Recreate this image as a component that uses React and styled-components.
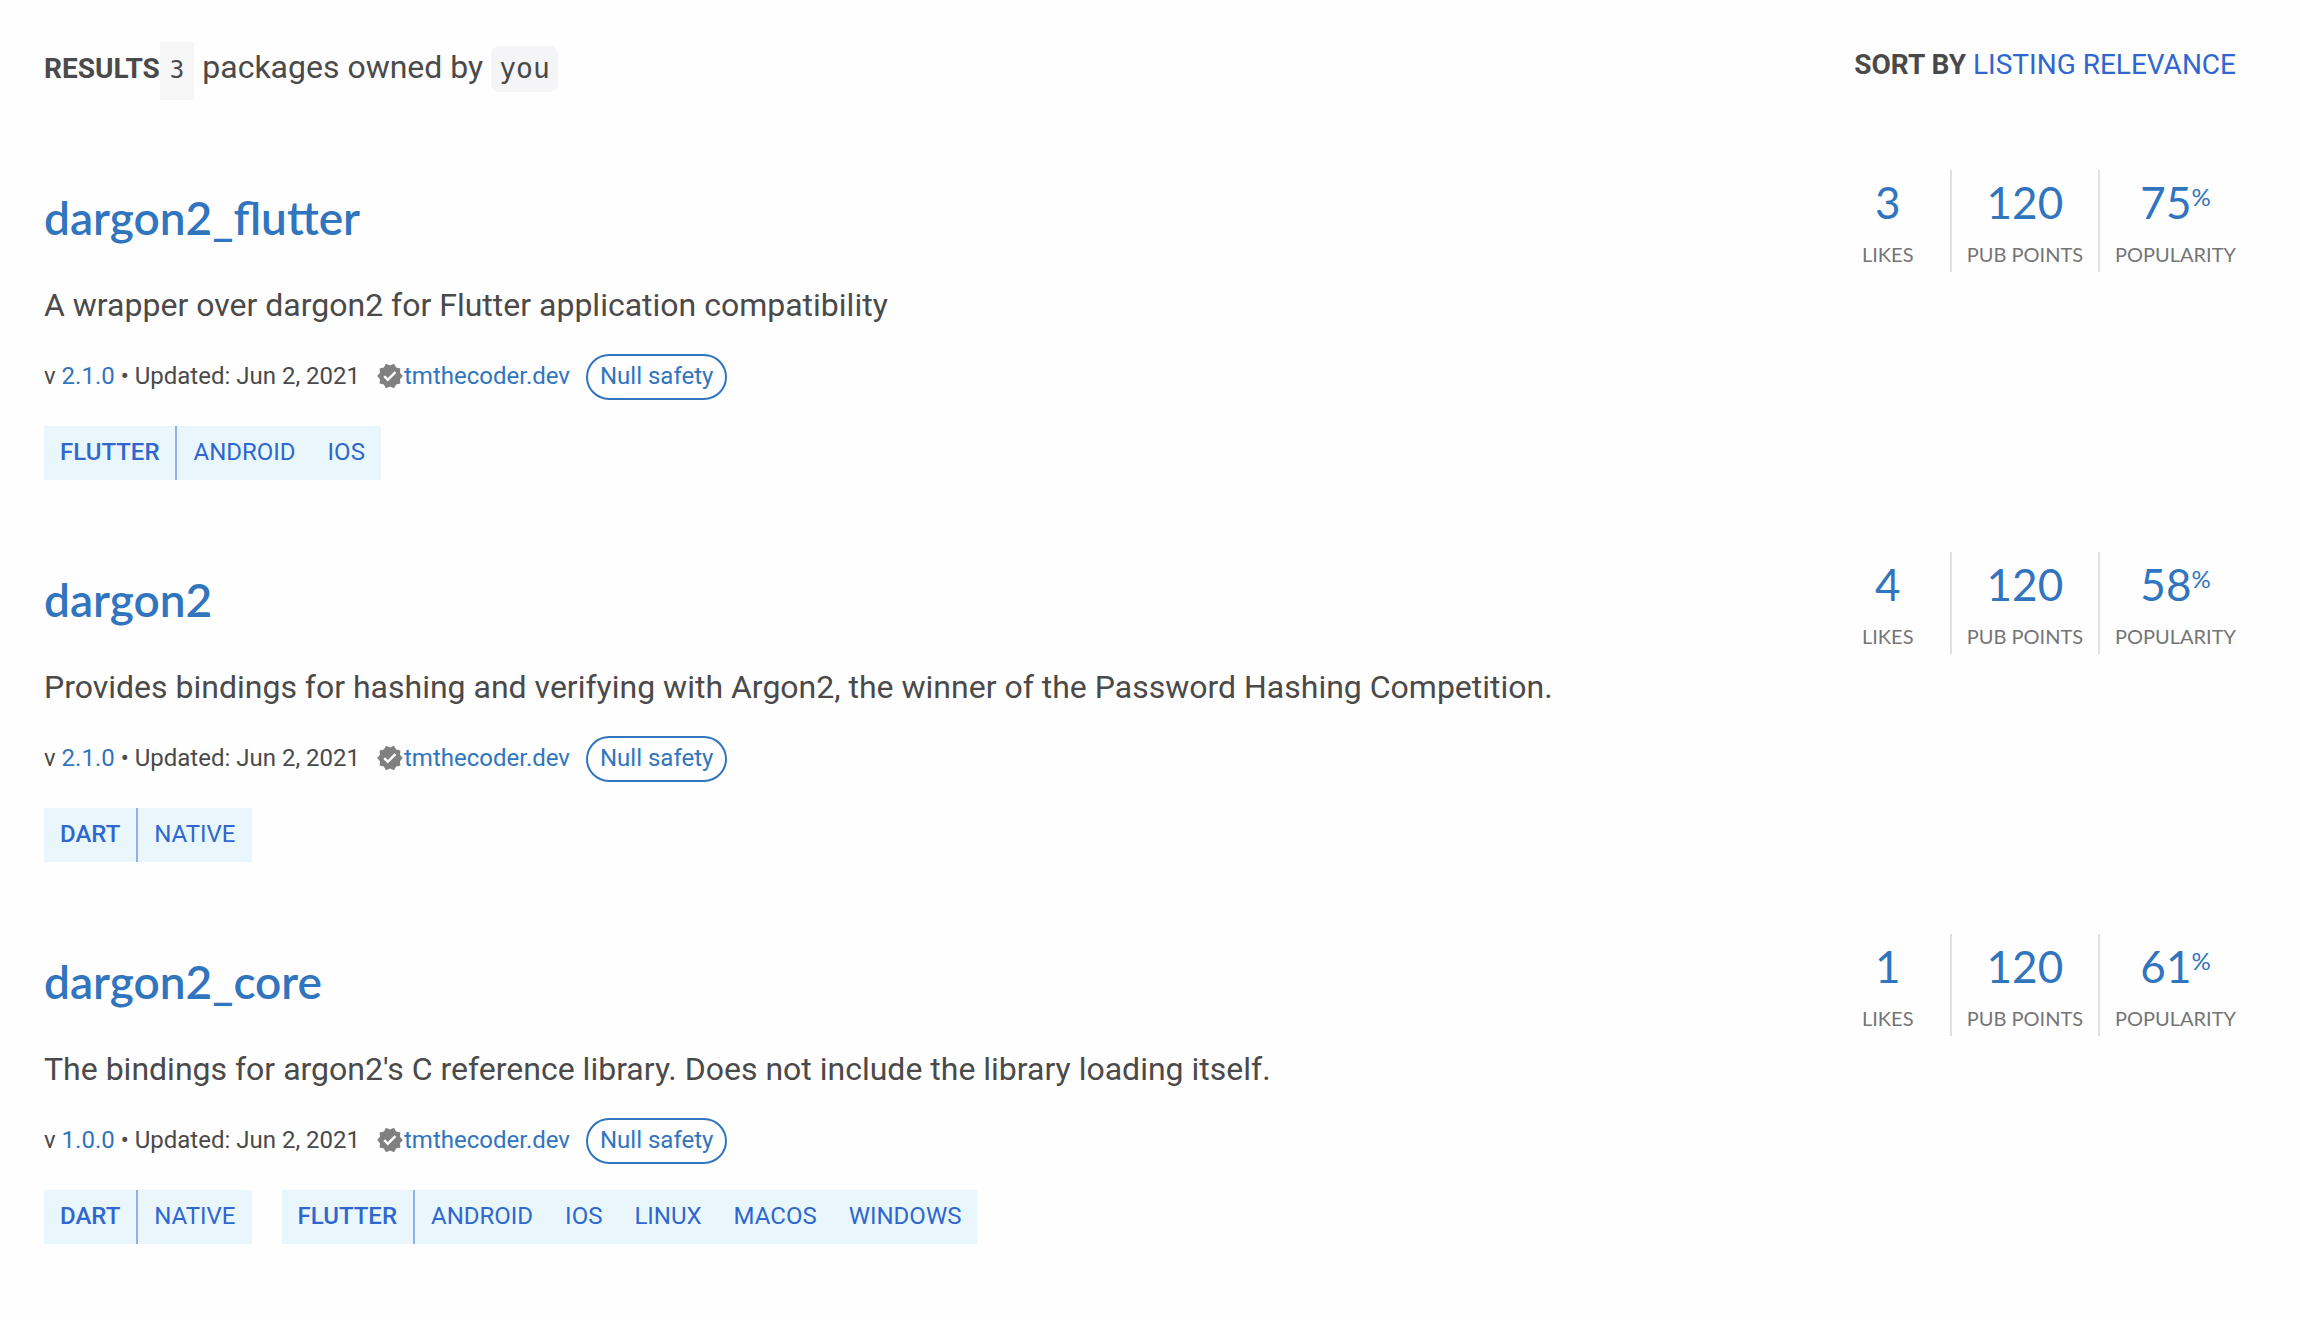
import React from "react";
import styled, { createGlobalStyle } from "styled-components";
import { MdVerified } from "react-icons/md";

const color = {
  text: "#4a4a4a",
  link: "#3075be",
  accent: "#2f67cf",
  muted: "#757575",
  tag: "#e9f7fd",
  rule: "#e0e0e0",
};

const GlobalStyle = createGlobalStyle`
  *, *::before, *::after { box-sizing: border-box; }
  body {
    margin: 0;
    background: #fefefe;
    color: ${color.text};
    font: 400 32px/48px Roboto, "Noto Sans", sans-serif;
  }
  a { color: ${color.link}; text-decoration: none; }
`;

const Page = styled.main`
  padding: 41px 64px 72px 44px;
`;

const Header = styled.header`
  display: flex;
  justify-content: space-between;
  align-items: flex-start;
`;

const Summary = styled.p`
  margin: 0;
  display: flex;
  align-items: baseline;
  padding-top: 1px;
`;

const Caption = styled.strong`
  font-size: 28px;
  font-weight: 700;
`;

const Count = styled.code`
  padding: 9px 10px 11px;
  margin-right: 8px;
  background: #f6f6f6;
  font: 400 24px/38px "DejaVu Sans Mono", monospace;
`;

const Owner = styled.code`
  padding: 4px 8px;
  margin-left: 8px;
  border-radius: 8px;
  background: #f5f5f7;
  font: 400 28px/38px "DejaVu Sans Mono", monospace;
`;

const Sort = styled.div`
  display: flex;
  gap: 7px;
  font-size: 28px;
`;

const SortButton = styled.button`
  padding: 0;
  border: 0;
  background: none;
  color: ${color.accent};
  font: inherit;
  cursor: pointer;
`;

const List = styled.div`
  display: flex;
  flex-direction: column;
  gap: 72px;
  padding-top: 70px;
`;

const Item = styled.article`
  display: flex;
  justify-content: space-between;
  align-items: flex-start;
`;

const Details = styled.div`
  min-width: 0;
  padding-top: 18px;
`;

const Title = styled.h3`
  margin: 0;
  font: 600 46px/60px Lato, sans-serif;
`;

const Description = styled.p`
  margin: 33px 0 25px;
`;

const Meta = styled.div`
  display: flex;
  align-items: flex-start;
  font-size: 24px;
  line-height: 44px;
`;

const Publisher = styled.a`
  display: flex;
  align-items: center;
  margin: 0 16px;

  svg { color: #808080; }
`;

const Badge = styled.a`
  padding: 0 12px 2px;
  border: 2px solid ${color.link};
  border-radius: 23px;
  line-height: 40px;
`;

const Tags = styled.div`
  display: flex;
  gap: 30px;
  margin-top: 26px;
`;

const TagGroup = styled.div`
  display: flex;
  background: ${color.tag};
  font-size: 24px;
  line-height: 52px;
`;

const Tag = styled.a`
  padding: 0 16px 2px;
  color: ${color.accent};
  font-weight: ${(p) => (p.$main ? 500 : 400)};
  border-right: ${(p) => (p.$main ? "2px solid #8fb0e8" : "0")};
`;

const Scores = styled.a`
  display: flex;
  flex-shrink: 0;
`;

const Score = styled.div`
  min-width: 126px;
  height: 102px;
  padding: ${(p) => (p.$last ? "8px 0 0 15px" : "8px 15px 0")};
  border-right: ${(p) => (p.$last ? "0" : `2px solid ${color.rule}`)};
  text-align: center;
  font-family: Lato, sans-serif;
`;

const Value = styled.div`
  display: flex;
  justify-content: center;
  font-size: 44px;
  line-height: 48px;
`;

const Percent = styled.span`
  font-size: 24px;
  line-height: 38px;
`;

const Label = styled.div`
  color: ${color.muted};
  font-size: 20px;
  line-height: 56px;
`;

const packages = [
  {
    name: "dargon2_flutter",
    description: "A wrapper over dargon2 for Flutter application compatibility",
    version: "2.1.0",
    likes: 3,
    popularity: 75,
    tags: [["FLUTTER", "ANDROID", "IOS"]],
  },
  {
    name: "dargon2",
    description:
      "Provides bindings for hashing and verifying with Argon2, the winner of the Password Hashing Competition.",
    version: "2.1.0",
    likes: 4,
    popularity: 58,
    tags: [["DART", "NATIVE"]],
  },
  {
    name: "dargon2_core",
    description:
      "The bindings for argon2's C reference library. Does not include the library loading itself.",
    version: "1.0.0",
    likes: 1,
    popularity: 61,
    tags: [
      ["DART", "NATIVE"],
      ["FLUTTER", "ANDROID", "IOS", "LINUX", "MACOS", "WINDOWS"],
    ],
  },
];

function Package({ name, description, version, likes, popularity, tags }) {
  return (
    <Item>
      <Details>
        <Title><a href="#package">{name}</a></Title>
        <Description>{description}</Description>
        <Meta>
          <span>v <a href="#version">{version}</a> • Updated: Jun 2, 2021</span>
          <Publisher href="#publisher"><MdVerified size={28} />tmthecoder.dev</Publisher>
          <Badge href="#null-safety">Null safety</Badge>
        </Meta>
        <Tags>
          {tags.map((group) => (
            <TagGroup key={group[0]}>
              {group.map((tag, i) => (
                <Tag key={tag} href="#tag" $main={i === 0}>{tag}</Tag>
              ))}
            </TagGroup>
          ))}
        </Tags>
      </Details>
      <Scores href="#score">
        <Score><Value>{likes}</Value><Label>LIKES</Label></Score>
        <Score><Value>120</Value><Label>PUB POINTS</Label></Score>
        <Score $last>
          <Value>{popularity}<Percent>%</Percent></Value>
          <Label>POPULARITY</Label>
        </Score>
      </Scores>
    </Item>
  );
}

export default function App() {
  return (
    <>
      <GlobalStyle />
      <Page>
        <Header>
          <Summary>
            <Caption>RESULTS</Caption>
            <Count>3</Count>
            <span>packages owned by</span>
            <Owner>you</Owner>
          </Summary>
          <Sort>
            <Caption>SORT BY</Caption>
            <SortButton type="button">LISTING RELEVANCE</SortButton>
          </Sort>
        </Header>
        <List>
          {packages.map((p) => <Package key={p.name} {...p} />)}
        </List>
      </Page>
    </>
  );
}
